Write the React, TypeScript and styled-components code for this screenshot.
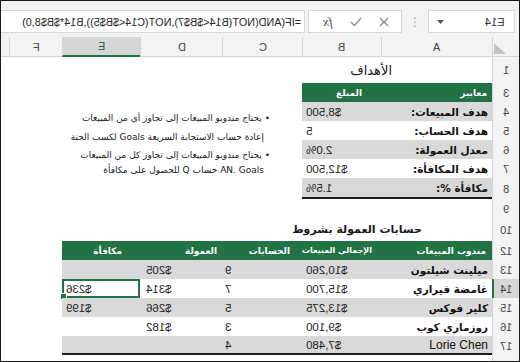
import React from 'react';
import styled, { createGlobalStyle } from 'styled-components';

const GREEN = '#217346';
const BAND = '#d9d9d9';
const COLS = '8px 53px 78px 82px 80px 79px 111px 27px';
const ARABIC = "'DejaVu Sans', sans-serif";

const GlobalStyle = createGlobalStyle`
  html, body { margin: 0; padding: 0; background: #fff; }
  body { font-family: 'Liberation Sans', 'DejaVu Sans', Arial, sans-serif; }
`;

const Frame = styled.div`
  width: 518px;
  height: 360px;
  border: 1px solid #1b1b1b;
  overflow: hidden;
  background: #fff;
`;

// the screenshot is flipped horizontally, so latin text and digits read mirrored
const Flip = styled.span`
  display: inline-block;
  transform: scaleX(-1);
  white-space: nowrap;
`;

const Toolbar = styled.div`
  display: flex;
  align-items: flex-start;
  height: 36px;
  padding: 9px 4px 0 0;
  box-sizing: border-box;
  background: #f3f3f3;
`;

const FormulaInput = styled.div`
  flex: 1;
  min-width: 0;
  height: 23px;
  margin-left: -2px;
  margin-right: 3px;
  background: #fff;
  border: 1px solid #d6d6d6;
  box-sizing: border-box;
  overflow: hidden;
`;

const FormulaText = styled.div`
  height: 100%;
  display: flex;
  align-items: center;
  padding-left: 3px;
  transform: scaleX(-1);
  white-space: nowrap;
  font-size: 10.8px;
  color: #262626;
`;

const FxBox = styled.div`
  width: 94px;
  height: 23px;
  display: flex;
  align-items: center;
  justify-content: space-between;
  padding: 0 12px 0 14px;
  background: #fff;
  border: 1px solid #d6d6d6;
  box-sizing: border-box;
`;

const FxText = styled(Flip)`
  font-family: 'Liberation Serif', serif;
  font-style: italic;
  font-size: 13px;
  color: #555;
`;

const Dots = styled.div`
  width: 26px;
  height: 23px;
  display: flex;
  align-items: center;
  justify-content: center;
  color: #a0a0a0;
  font-size: 12px;
`;

const NameBox = styled.div`
  width: 87px;
  height: 23px;
  display: flex;
  align-items: center;
  justify-content: space-between;
  padding: 0 9px 0 8px;
  background: #fff;
  border: 1px solid #d6d6d6;
  box-sizing: border-box;
  font-size: 11px;
  color: #333;
`;

const Sheet = styled.div`
  display: grid;
  grid-template-columns: ${COLS};
  grid-template-rows: 20px 26px repeat(5, 19px) 21px 19px 23px repeat(6, 19px) 19px;
`;

const ColHead = styled.div<{ $sel?: boolean; $first?: boolean }>`
  display: flex;
  align-items: center;
  justify-content: center;
  background: ${(p) => (p.$sel ? '#d6d6d6' : '#f3f3f3')};
  border-left: ${(p) => (p.$first ? 'none' : '1px solid #d4d4d4')};
  border-bottom: ${(p) => (p.$sel ? `2px solid ${GREEN}` : '1px solid #d4d4d4')};
  box-sizing: border-box;
  font-size: 11px;
  color: ${(p) => (p.$sel ? '#1e5c38' : '#444')};
`;

const Corner = styled(ColHead)`
  align-items: flex-end;
  justify-content: flex-start;
  padding: 0 0 2px 1px;
`;

const RowNum = styled.div<{ $sel?: boolean }>`
  display: flex;
  align-items: center;
  justify-content: center;
  background: ${(p) => (p.$sel ? '#d6d6d6' : '#f3f3f3')};
  border-left: ${(p) => (p.$sel ? `2px solid ${GREEN}` : '1px solid #d4d4d4')};
  box-sizing: border-box;
  font-size: 11px;
  color: #444;
`;

const Blank = styled.div``;

const Title = styled.div<{ $span: number; $pr: number; $size: number; $bold?: boolean }>`
  grid-column: span ${(p) => p.$span};
  display: flex;
  align-items: center;
  justify-content: flex-end;
  padding-right: ${(p) => p.$pr}px;
  font-family: ${ARABIC};
  font-size: ${(p) => p.$size}px;
  font-weight: ${(p) => (p.$bold ? 'bold' : 'normal')};
  color: #1a1a1a;
  white-space: nowrap;
`;

const Notes = styled.div`
  grid-column: 2 / 6;
  grid-row: span 6;
  display: flex;
  flex-direction: column;
  align-items: flex-end;
  padding: 29px 32px 0 0;
  font-family: ${ARABIC};
  font-size: 9px;
  color: #222;
`;

const NoteLine = styled.div<{ $indent?: boolean; $gap?: number }>`
  line-height: 12px;
  margin-right: ${(p) => (p.$indent ? 6 : 0)}px;
  margin-top: ${(p) => p.$gap ?? 0}px;
  white-space: nowrap;
`;

const HeadCell = styled.div<{ $pr: number; $size?: number }>`
  display: flex;
  align-items: center;
  justify-content: flex-end;
  padding-right: ${(p) => p.$pr}px;
  background: ${GREEN};
  color: #fff;
  font-family: ${ARABIC};
  font-weight: bold;
  font-size: ${(p) => p.$size ?? 9}px;
  white-space: nowrap;
`;

const LabelCell = styled.div<{ $band?: boolean; $last?: boolean }>`
  display: flex;
  align-items: center;
  justify-content: flex-end;
  padding-right: 4px;
  background: ${(p) => (p.$band ? BAND : '#fff')};
  border-bottom: ${(p) => (p.$last ? '2px solid #1c1c1c' : 'none')};
  box-sizing: border-box;
  color: #111;
  white-space: nowrap;
`;

const LabelText = styled.span<{ $latin?: boolean }>`
  font-family: ${(p) => (p.$latin ? "'Liberation Sans', sans-serif" : ARABIC)};
  font-weight: ${(p) => (p.$latin ? 'normal' : 'bold')};
  font-size: ${(p) => (p.$latin ? 12 : 10.5)}px;
`;

const ValueCell = styled.div<{ $band?: boolean; $last?: boolean; $pl: number }>`
  position: relative;
  display: flex;
  align-items: center;
  justify-content: flex-start;
  padding-left: ${(p) => p.$pl}px;
  background: ${(p) => (p.$band ? BAND : '#fff')};
  border-bottom: ${(p) => (p.$last ? '2px solid #1c1c1c' : 'none')};
  box-sizing: border-box;
  font-size: 11.5px;
  color: #222;
`;

const Selection = styled.div`
  position: absolute;
  inset: 0;
  border: 2px solid ${GREEN};
  pointer-events: none;

  &::after {
    content: '';
    position: absolute;
    left: -4px;
    bottom: -4px;
    width: 5px;
    height: 5px;
    background: ${GREEN};
    border: 1px solid #fff;
  }
`;

const goals = [
  { label: 'هدف المبيعات:', value: '$8,500' },
  { label: 'هدف الحساب:', value: '5' },
  { label: 'معدل العمولة:', value: '2.0%' },
  { label: 'هدف المكافأة:', value: '$12,500' },
  { label: 'مكافأة %:', value: '1.5%' },
];

const reps = [
  { n: 13, name: 'ميلينت شيلتون', total: '$10,260', acc: '9', com: '$205', bonus: '' },
  { n: 14, name: 'غامضة فيراري', total: '$15,700', acc: '7', com: '$314', bonus: '$236' },
  { n: 15, name: 'كلير فوكس', total: '$13,275', acc: '5', com: '$266', bonus: '$199' },
  { n: 16, name: 'روزماري كوب', total: '$9,100', acc: '3', com: '$182', bonus: '' },
  { n: 17, name: 'Lorie Chen', total: '$7,480', acc: '4', com: '', bonus: '' },
];

const blanks = (n: number, key: string) =>
  Array.from({ length: n }, (_, i) => <Blank key={`${key}-${i}`} />);

const Num = ({ n, sel }: { n: number; sel?: boolean }) => (
  <RowNum $sel={sel}>
    <Flip>{n}</Flip>
  </RowNum>
);

export default function App() {
  return (
    <>
      <GlobalStyle />
      <Frame>
        <Toolbar>
          <FormulaInput>
            <FormulaText>=IF(AND(NOT(B14&lt;$B$7),NOT(C14&lt;$B$5)),B14*$B$8,0)</FormulaText>
          </FormulaInput>
          <FxBox>
            <FxText>fx</FxText>
            <svg width="12" height="10" viewBox="0 0 12 10">
              <path d="M1 5 L4.5 8.5 L11 1" fill="none" stroke="#8a8a8a" strokeWidth="1.2" />
            </svg>
            <svg width="10" height="10" viewBox="0 0 10 10">
              <path d="M1 1 L9 9 M9 1 L1 9" fill="none" stroke="#8a8a8a" strokeWidth="1.2" />
            </svg>
          </FxBox>
          <Dots>⋮</Dots>
          <NameBox>
            <svg width="7" height="4" viewBox="0 0 7 4">
              <path d="M0 0 H7 L3.5 4 Z" fill="#555" />
            </svg>
            <Flip>E14</Flip>
          </NameBox>
        </Toolbar>

        <Sheet>
          <ColHead $first />
          {['F', 'E', 'D', 'C', 'B', 'A'].map((c) => (
            <ColHead key={c} $sel={c === 'E'}>
              <Flip>{c}</Flip>
            </ColHead>
          ))}
          <Corner>
            <svg width="12" height="11" viewBox="0 0 12 11">
              <path d="M0 0 L12 11 H0 Z" fill="#c4c4c4" />
            </svg>
          </Corner>

          {/* row 1 */}
          {blanks(5, 'r1')}
          <Title $span={2} $pr={100} $size={13}>الأهداف</Title>
          <Num n={1} />

          {/* row 3, the notes run down to row 8 */}
          <Blank />
          <Notes>
            <NoteLine dir="rtl">• يحتاج مندوبو المبيعات إلى تجاوز أي من المبيعات</NoteLine>
            <NoteLine dir="rtl" $indent $gap={7}>إعادة حساب الاستجابة السريعة Goals لكسب الجنة</NoteLine>
            <NoteLine dir="rtl" $gap={6}>• يحتاج مندوبو المبيعات إلى تجاوز كل من المبيعات</NoteLine>
            <NoteLine dir="rtl" $indent $gap={3}>AN. Goals حساب Q للحصول على مكافأة</NoteLine>
          </Notes>
          <HeadCell $pr={19}>المبلغ</HeadCell>
          <HeadCell $pr={5}>معايير</HeadCell>
          <Num n={3} />

          {goals.map((g, i) => (
            <React.Fragment key={g.label}>
              <Blank />
              <ValueCell $band={i % 2 === 0} $last={i === goals.length - 1} $pl={4}>
                <Flip>{g.value}</Flip>
              </ValueCell>
              <LabelCell $band={i % 2 === 0} $last={i === goals.length - 1}>
                <LabelText dir="rtl">{g.label}</LabelText>
              </LabelCell>
              <Num n={i + 4} />
            </React.Fragment>
          ))}

          {/* row 9 */}
          {blanks(7, 'r9')}
          <Num n={9} />

          {/* row 10 */}
          {blanks(5, 'r10')}
          <Title $span={2} $pr={70} $size={11} $bold>حسابات العمولة بشروط</Title>
          <Num n={10} />

          {/* row 12, table header */}
          {blanks(2, 'r12')}
          <HeadCell $pr={18}>مكافأة</HeadCell>
          <HeadCell $pr={5}>العمولة</HeadCell>
          <HeadCell $pr={12}>الحسابات</HeadCell>
          <HeadCell $pr={9} $size={8}>الإجمالي المبيعات</HeadCell>
          <HeadCell $pr={6}>مندوب المبيعات</HeadCell>
          <Num n={12} />

          {reps.map((r, i) => {
            const band = i % 2 === 0;
            const last = i === reps.length - 1;
            return (
              <React.Fragment key={r.n}>
                {blanks(2, `rep${r.n}`)}
                <ValueCell $band={band} $last={last} $pl={4}>
                  {r.bonus && <Flip>{r.bonus}</Flip>}
                  {r.n === 14 && <Selection />}
                </ValueCell>
                <ValueCell $band={band} $last={last} $pl={6}>
                  {r.com && <Flip>{r.com}</Flip>}
                </ValueCell>
                <ValueCell $band={band} $last={last} $pl={3}>
                  <Flip>{r.acc}</Flip>
                </ValueCell>
                <ValueCell $band={band} $last={last} $pl={4}>
                  <Flip>{r.total}</Flip>
                </ValueCell>
                <LabelCell $band={band} $last={last}>
                  <LabelText dir="rtl" $latin={r.n === 17}>{r.name}</LabelText>
                </LabelCell>
                <Num n={r.n} sel={r.n === 14} />
              </React.Fragment>
            );
          })}

          {/* row 18 */}
          {blanks(7, 'r18')}
          <Num n={18} />
        </Sheet>
      </Frame>
    </>
  );
}
